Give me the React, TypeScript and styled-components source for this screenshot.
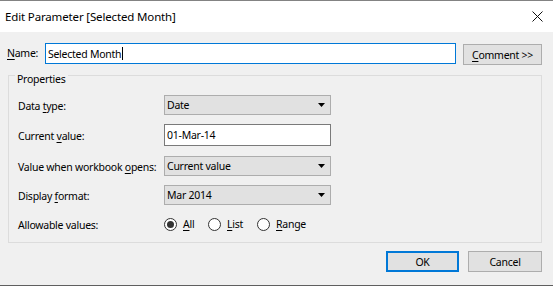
import React from "react";
import styled, { createGlobalStyle } from "styled-components";

const FONT = `"Noto Sans", "Segoe UI", "Liberation Sans", sans-serif`;

const Global = createGlobalStyle`
  html, body { margin: 0; padding: 0; background: #f0f0f0; }
  body { font-family: ${FONT}; font-size: 10.5px; color: #000; letter-spacing: -0.25px; }
  * { box-sizing: border-box; }
`;

const Window = styled.div`
  width: 553px;
  height: 286px;
  display: flex;
  flex-direction: column;
  border-top: 1px solid #838383;
  background: #f0f0f0;
  overflow: hidden;
`;

const TitleBar = styled.div`
  height: 31px;
  flex: 0 0 31px;
  background: #fff;
  display: flex;
  align-items: center;
  justify-content: space-between;
  padding: 0 10px 0 5px;
  font-size: 11.5px;
  letter-spacing: -0.15px;
  white-space: nowrap;
`;

const CloseIcon = () => (
  <svg width="11" height="11" viewBox="0 0 11 11" aria-hidden>
    <path d="M0.5 0.5 L10.5 10.5 M10.5 0.5 L0.5 10.5" stroke="#111" strokeWidth="1" fill="none" />
  </svg>
);

const Body = styled.div`
  flex: 1;
  display: flex;
  flex-direction: column;
  padding: 11px 11px 0 6px;
  border-bottom: 1px solid #5f5f5f;
  white-space: nowrap;
`;

const NameRow = styled.div`
  display: flex;
  align-items: flex-start;
  height: 21px;
`;

const NameLabel = styled.label`
  width: 39px;
  line-height: 21px;
  padding-left: 1px;
`;

const NameInput = styled.div`
  width: 412px;
  height: 21px;
  border: 1px solid #0078d7;
  background: #fff;
  display: flex;
  align-items: center;
  padding-left: 2px;
`;

const Caret = styled.span`
  display: inline-block;
  width: 1px;
  height: 13px;
  background: #000;
  margin-left: 1px;
`;

const Button = styled.div<{ $default?: boolean; $w: number }>`
  width: ${(p) => p.$w}px;
  height: 21px;
  background: #e1e1e1;
  border: ${(p) => (p.$default ? "2px solid #0078d7" : "1px solid #adadad")};
  display: flex;
  align-items: center;
  justify-content: center;
`;

const CommentButton = styled(Button)`
  margin: 1px 0 0 7px;
`;

const GroupBox = styled.div`
  margin: 11px 0 0 2px;
  width: 534px;
  border: 1px solid #dcdcdc;
  padding: 0 0 8px 9px;
`;

const Legend = styled.div`
  display: table;
  margin: -4px 0 0 -3px;
  padding: 0 2px 0 2px;
  background: #f0f0f0;
  line-height: 15px;
`;

const FormGrid = styled.div`
  display: grid;
  grid-template-columns: 146px 167px;
  grid-template-rows: 20px 23px 20px 20px 20px;
  row-gap: 9px;
  margin-top: 8px;
`;

const Label = styled.div`
  display: flex;
  align-items: center;
  height: 20px;
  padding-top: 1px;
`;

const LabelTall = styled(Label)`
  height: 22px;
`;

const Select = styled.div`
  height: 20px;
  background: #e1e1e1;
  border: 1px solid #adadad;
  display: flex;
  align-items: center;
  justify-content: space-between;
  padding: 0 5px 0 2px;
`;

const Arrow = () => (
  <svg width="7" height="4" viewBox="0 0 7 4" aria-hidden>
    <path d="M0 0 H7 L3.5 4 Z" fill="#000" />
  </svg>
);

const TextInput = styled.div`
  height: 22px;
  background: #fff;
  border: 1px solid #7a7a7a;
  display: flex;
  align-items: center;
  padding-left: 2px;
`;

const RadioGroup = styled.div`
  display: flex;
  align-items: center;
  height: 20px;
`;

const RadioItem = styled.div<{ $w: number }>`
  display: flex;
  align-items: center;
  width: ${(p) => p.$w}px;
  flex: none;
`;

const RadioCircle = styled.span<{ $checked?: boolean }>`
  width: 13px;
  height: 13px;
  border-radius: 50%;
  border: 1px solid #333;
  background: #fff;
  display: flex;
  align-items: center;
  justify-content: center;
  margin-right: 6px;
  flex: none;
  &::after {
    content: "";
    display: ${(p) => (p.$checked ? "block" : "none")};
    width: 7px;
    height: 7px;
    border-radius: 50%;
    background: #333;
  }
`;

const Footer = styled.div`
  display: flex;
  justify-content: flex-end;
  gap: 9px;
  margin-top: 8px;
`;

const U = styled.span`
  text-decoration: underline;
  text-underline-offset: 2px;
`;

export default function App() {
  return (
    <>
      <Global />
      <Window>
        <TitleBar>
          <span>Edit Parameter [Selected Month]</span>
          <CloseIcon />
        </TitleBar>
        <Body>
          <NameRow>
            <NameLabel>
              <U>N</U>ame:
            </NameLabel>
            <NameInput>
              Selected Month
              <Caret />
            </NameInput>
            <CommentButton $w={79}>
              <span>
                <U>C</U>omment &gt;&gt;
              </span>
            </CommentButton>
          </NameRow>
          <GroupBox>
            <Legend>Properties</Legend>
            <FormGrid>
              <Label>
                <span>
                  Data <U>t</U>ype:
                </span>
              </Label>
              <Select>
                <span>Date</span>
                <Arrow />
              </Select>
              <LabelTall>
                <span>
                  Current <U>v</U>alue:
                </span>
              </LabelTall>
              <TextInput>01-Mar-14</TextInput>
              <Label>
                <span>
                  Value when workbook <U>o</U>pens:
                </span>
              </Label>
              <Select>
                <span>Current value</span>
                <Arrow />
              </Select>
              <Label>
                <span>
                  Display <U>f</U>ormat:
                </span>
              </Label>
              <Select>
                <span>Mar 2014</span>
                <Arrow />
              </Select>
              <Label>Allowable values:</Label>
              <RadioGroup>
                <RadioItem $w={44}>
                  <RadioCircle $checked />
                  <U>A</U>ll
                </RadioItem>
                <RadioItem $w={49}>
                  <RadioCircle />
                  <U>L</U>ist
                </RadioItem>
                <RadioItem $w={60}>
                  <RadioCircle />
                  <U>R</U>ange
                </RadioItem>
              </RadioGroup>
            </FormGrid>
          </GroupBox>
          <Footer>
            <Button $default $w={73}>
              OK
            </Button>
            <Button $w={74}>Cancel</Button>
          </Footer>
        </Body>
      </Window>
    </>
  );
}
